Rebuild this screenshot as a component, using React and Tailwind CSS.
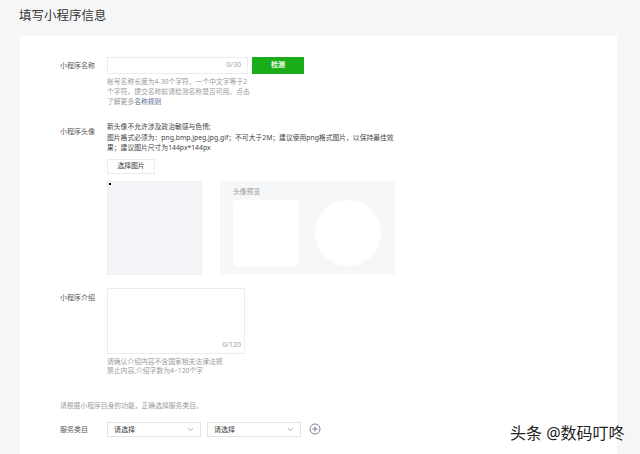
import React from "react";

const font = { fontFamily: '"Noto Sans", "Noto Sans CJK SC", sans-serif' };

const Chevron = () => (
  <svg width="7" height="5" viewBox="0 0 7 5" className="shrink-0">
    <path d="M1 1.2 L3.5 3.6 L6 1.2" fill="none" stroke="#a3a3a3" strokeWidth="0.9" />
  </svg>
);

const Select = () => (
  <div className="flex h-[15px] w-[94px] items-center justify-between border border-[#e4e4e8] bg-white pl-[6px] pr-[6px] text-[7px] leading-none text-[#353535]">
    <span>请选择</span>
    <Chevron />
  </div>
);

const App = () => {
  return (
    <div
      className="relative h-[454px] w-[640px] overflow-hidden bg-[#f5f6f8] text-[#353535]"
      style={font}
    >
      <h1 className="h-[36px] pl-[19px] pt-[8px] text-[12.5px] leading-[16px] text-[#353535]">
        填写小程序信息
      </h1>

      <div className="ml-[20px] h-[418px] w-[597px] bg-white pl-[40px] pt-[21px]">
        {/* 名称 */}
        <div className="flex">
          <div className="w-[47px] pt-[4px] text-[7px] leading-[9px] text-[#555]">小程序名称</div>
          <div>
            <div className="flex gap-[4px]">
              <div className="flex h-[17px] w-[141px] items-center justify-end border border-[#ececf0] pr-[6px] text-[7px] text-[#a0a0a0]">
                0/30
              </div>
              <button className="h-[17px] w-[52px] bg-[#1aad19] text-[7px] font-bold text-white">
                检测
              </button>
            </div>
            <div className="mt-[3px] w-[145px] whitespace-nowrap text-[6.8px] leading-[10px] text-[#9a9a9a]">
              <div>帐号名称长度为4-30个字符，一个中文字等于2</div>
              <div>个字符。提交名称前请检测名称是否可用。点击</div>
              <div>
                了解更多<span className="text-[#576b95]">名称规则</span>
              </div>
            </div>
          </div>
        </div>

        {/* 头像 */}
        <div className="mt-[15px] flex">
          <div className="w-[47px] pt-[5px] text-[7px] leading-[9px] text-[#555]">小程序头像</div>
          <div>
            <div className="whitespace-nowrap text-[6.8px] leading-[10.5px] text-[#444]">
              <div>新头像不允许涉及政治敏感与色情;</div>
              <div>图片格式必须为：png,bmp,jpeg,jpg,gif；不可大于2M；建议使用png格式图片，以保持最佳效</div>
              <div>果；建议图片尺寸为144px*144px</div>
            </div>
            <button className="mt-[5px] block h-[15px] w-[48px] border border-[#ececf0] bg-white text-[6.8px] leading-none text-[#353535]">
              选择图片
            </button>
            <div className="mt-[7px] flex">
              <div className="relative h-[94px] w-[95px] border border-[#efeff2] bg-[#f4f5f8]">
                <div className="absolute left-[1px] top-[1px] h-[2px] w-[2px] bg-black" />
              </div>
              <div className="ml-[18px] h-[93px] w-[175px] bg-[#f6f7f9] pl-[13px] pt-[7px]">
                <div className="text-[6.8px] leading-[8px] text-[#9a9a9a]">头像预览</div>
                <div className="mt-[4px] flex gap-[16px]">
                  <div className="h-[66px] w-[66px] rounded-[5px] bg-white" />
                  <div className="h-[66px] w-[66px] rounded-full bg-white" />
                </div>
              </div>
            </div>
          </div>
        </div>

        {/* 介绍 */}
        <div className="mt-[13px] flex">
          <div className="w-[47px] pt-[5px] text-[7px] leading-[9px] text-[#555]">小程序介绍</div>
          <div>
            <div className="flex h-[66px] w-[138px] items-end justify-end border border-[#ececf0] pb-[4px] pr-[3px] text-[7px] leading-[9px] text-[#a0a0a0]">
              0/120
            </div>
            <div className="mt-[3px] whitespace-nowrap text-[6.8px] leading-[9.5px] text-[#9a9a9a]">
              <div>请确认介绍内容不含国家相关法律法规</div>
              <div>禁止内容,介绍字数为4~120个字</div>
            </div>
          </div>
        </div>

        {/* 服务类目 */}
        <div className="mt-[25px] text-[6.8px] leading-[10px] text-[#9a9a9a]">
          请根据小程序目身的功能，正确选择服务类目。
        </div>
        <div className="mt-[11px] flex items-center">
          <div className="w-[47px] text-[7px] leading-[9px] text-[#555]">服务类目</div>
          <Select />
          <div className="ml-[6px]">
            <Select />
          </div>
          <svg width="12" height="12" viewBox="0 0 12 12" className="ml-[8px]">
            <circle cx="6" cy="6" r="5" fill="none" stroke="#6b6f8a" strokeWidth="0.9" />
            <path d="M6 3.3 V8.7 M3.3 6 H8.7" stroke="#6b6f8a" strokeWidth="0.9" />
          </svg>
        </div>
      </div>

      <div
        className="absolute left-[510px] top-[424px] text-[16px] leading-[18px] text-[#222]"
        style={{ textShadow: "0 0 2px #fff, 0 0 3px #fff" }}
      >
        头条 @数码叮咚
      </div>
    </div>
  );
};

export default App;
